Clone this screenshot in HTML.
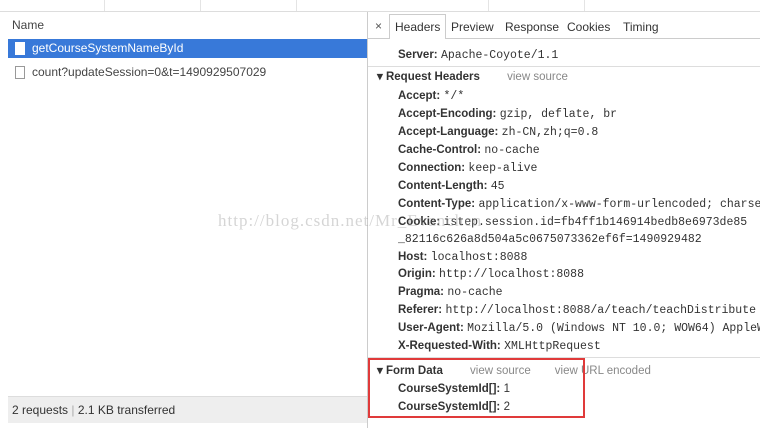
<!DOCTYPE html>
<html><head><meta charset="utf-8"><style>
*{margin:0;padding:0;box-sizing:border-box}
body{width:760px;height:428px;overflow:hidden;background:#fff;font-family:"Liberation Sans",sans-serif;font-size:12px;color:#303030;position:relative}
.a{position:absolute;white-space:nowrap}
.k{font-weight:bold;color:#333;font-size:11.5px}
.m{font-family:"Liberation Mono",monospace;font-size:11.5px;color:#333;font-weight:normal}
.r{position:absolute;left:398px;width:362px;overflow:hidden;white-space:nowrap;height:18px;line-height:18px}
.g{color:#888;font-weight:normal}
</style></head><body>
<div class="a" style="left:0;top:11px;width:760px;height:1px;background:#ddd"></div>
<div class="a" style="left:104px;top:0;width:1px;height:11px;background:#e4e4e4"></div>
<div class="a" style="left:200px;top:0;width:1px;height:11px;background:#e4e4e4"></div>
<div class="a" style="left:296px;top:0;width:1px;height:11px;background:#e4e4e4"></div>
<div class="a" style="left:488px;top:0;width:1px;height:11px;background:#e4e4e4"></div>
<div class="a" style="left:584px;top:0;width:1px;height:11px;background:#e4e4e4"></div>
<div class="a" style="left:367px;top:12px;width:1px;height:416px;background:#ccc"></div>
<div class="a" style="left:12px;top:18px;color:#444">Name</div>
<div class="a" style="left:8px;top:39px;width:359px;height:19px;background:#3879d9"></div>
<div class="a" style="left:15px;top:42px;width:10px;height:13px;background:#fff"></div>
<div class="a" style="left:32px;top:41px;color:#fff">getCourseSystemNameById</div>
<div class="a" style="left:15px;top:66px;width:10px;height:13px;border:1px solid #999"></div>
<div class="a" style="left:32px;top:65px;color:#444">count?updateSession=0&amp;t=1490929507029</div>
<div class="a" style="left:8px;top:396px;width:359px;height:27px;background:#eee;border-top:1px solid #ddd"></div>
<div class="a" style="left:12px;top:403px;color:#333">2 requests <span style="color:#aaa">|</span> 2.1 KB transferred</div>
<div class="a" style="left:368px;top:38px;width:392px;height:1px;background:#ccc"></div>
<div class="a" style="left:375px;top:19px;color:#555">×</div>
<div class="a" style="left:389px;top:14px;width:57px;height:25px;border:1px solid #ccc;border-bottom:none;background:#fff"></div>
<div class="a" style="left:395px;top:20px;color:#333">Headers</div>
<div class="a" style="left:451px;top:20px;color:#333">Preview</div>
<div class="a" style="left:505px;top:20px;color:#333">Response</div>
<div class="a" style="left:567px;top:20px;color:#333">Cookies</div>
<div class="a" style="left:623px;top:20px;color:#333">Timing</div>
<div class="r" style="top:45px"><span class="k">Server:</span> <span class="m">Apache-Coyote/1.1</span></div>
<div class="a" style="left:368px;top:66px;width:392px;height:1px;background:#ddd"></div>
<div class="a k" style="left:377px;top:69px">▾ Request Headers <span class="g" style="margin-left:24px">view source</span></div>
<div class="r" style="top:86px"><span class="k">Accept:</span> <span class="m">*/*</span></div>
<div class="r" style="top:104px"><span class="k">Accept-Encoding:</span> <span class="m">gzip, deflate, br</span></div>
<div class="r" style="top:122px"><span class="k">Accept-Language:</span> <span class="m">zh-CN,zh;q=0.8</span></div>
<div class="r" style="top:140px"><span class="k">Cache-Control:</span> <span class="m">no-cache</span></div>
<div class="r" style="top:158px"><span class="k">Connection:</span> <span class="m">keep-alive</span></div>
<div class="r" style="top:176px"><span class="k">Content-Length:</span> <span class="m">45</span></div>
<div class="r" style="top:194px"><span class="k">Content-Type:</span> <span class="m">application/x-www-form-urlencoded; charset=UTF-8</span></div>
<div class="r" style="top:212px"><span class="k">Cookie:</span> <span class="m">istep.session.id=fb4ff1b146914bedb8e6973de85</span></div>
<div class="r" style="top:229px"><span class="m">_82116c626a8d504a5c0675073362ef6f=1490929482</span></div>
<div class="r" style="top:247px"><span class="k">Host:</span> <span class="m">localhost:8088</span></div>
<div class="r" style="top:264px"><span class="k">Origin:</span> <span class="m">http://localhost:8088</span></div>
<div class="r" style="top:282px"><span class="k">Pragma:</span> <span class="m">no-cache</span></div>
<div class="r" style="top:300px"><span class="k">Referer:</span> <span class="m">http://localhost:8088/a/teach/teachDistribute</span></div>
<div class="r" style="top:318px"><span class="k">User-Agent:</span> <span class="m">Mozilla/5.0 (Windows NT 10.0; WOW64) AppleWebKit</span></div>
<div class="r" style="top:336px"><span class="k">X-Requested-With:</span> <span class="m">XMLHttpRequest</span></div>
<div class="a" style="left:368px;top:357px;width:392px;height:1px;background:#ddd"></div>
<div class="a k" style="left:377px;top:363px">▾ Form Data <span class="g" style="margin-left:24px">view source</span><span class="g" style="margin-left:24px">view URL encoded</span></div>
<div class="r" style="top:379px"><span class="k">CourseSystemId[]:</span> <span class="k" style="font-weight:normal">1</span></div>
<div class="r" style="top:397px"><span class="k">CourseSystemId[]:</span> <span class="k" style="font-weight:normal">2</span></div>
<div class="a" style="left:368px;top:358px;width:217px;height:60px;border:2px solid #e03a3a"></div>
<div class="a" style="left:218px;top:211px;font-family:'Liberation Serif',serif;font-size:17px;color:rgba(150,150,150,0.4);letter-spacing:1px">http://blog.csdn.net/Mr_Evanchen</div>
</body></html>
